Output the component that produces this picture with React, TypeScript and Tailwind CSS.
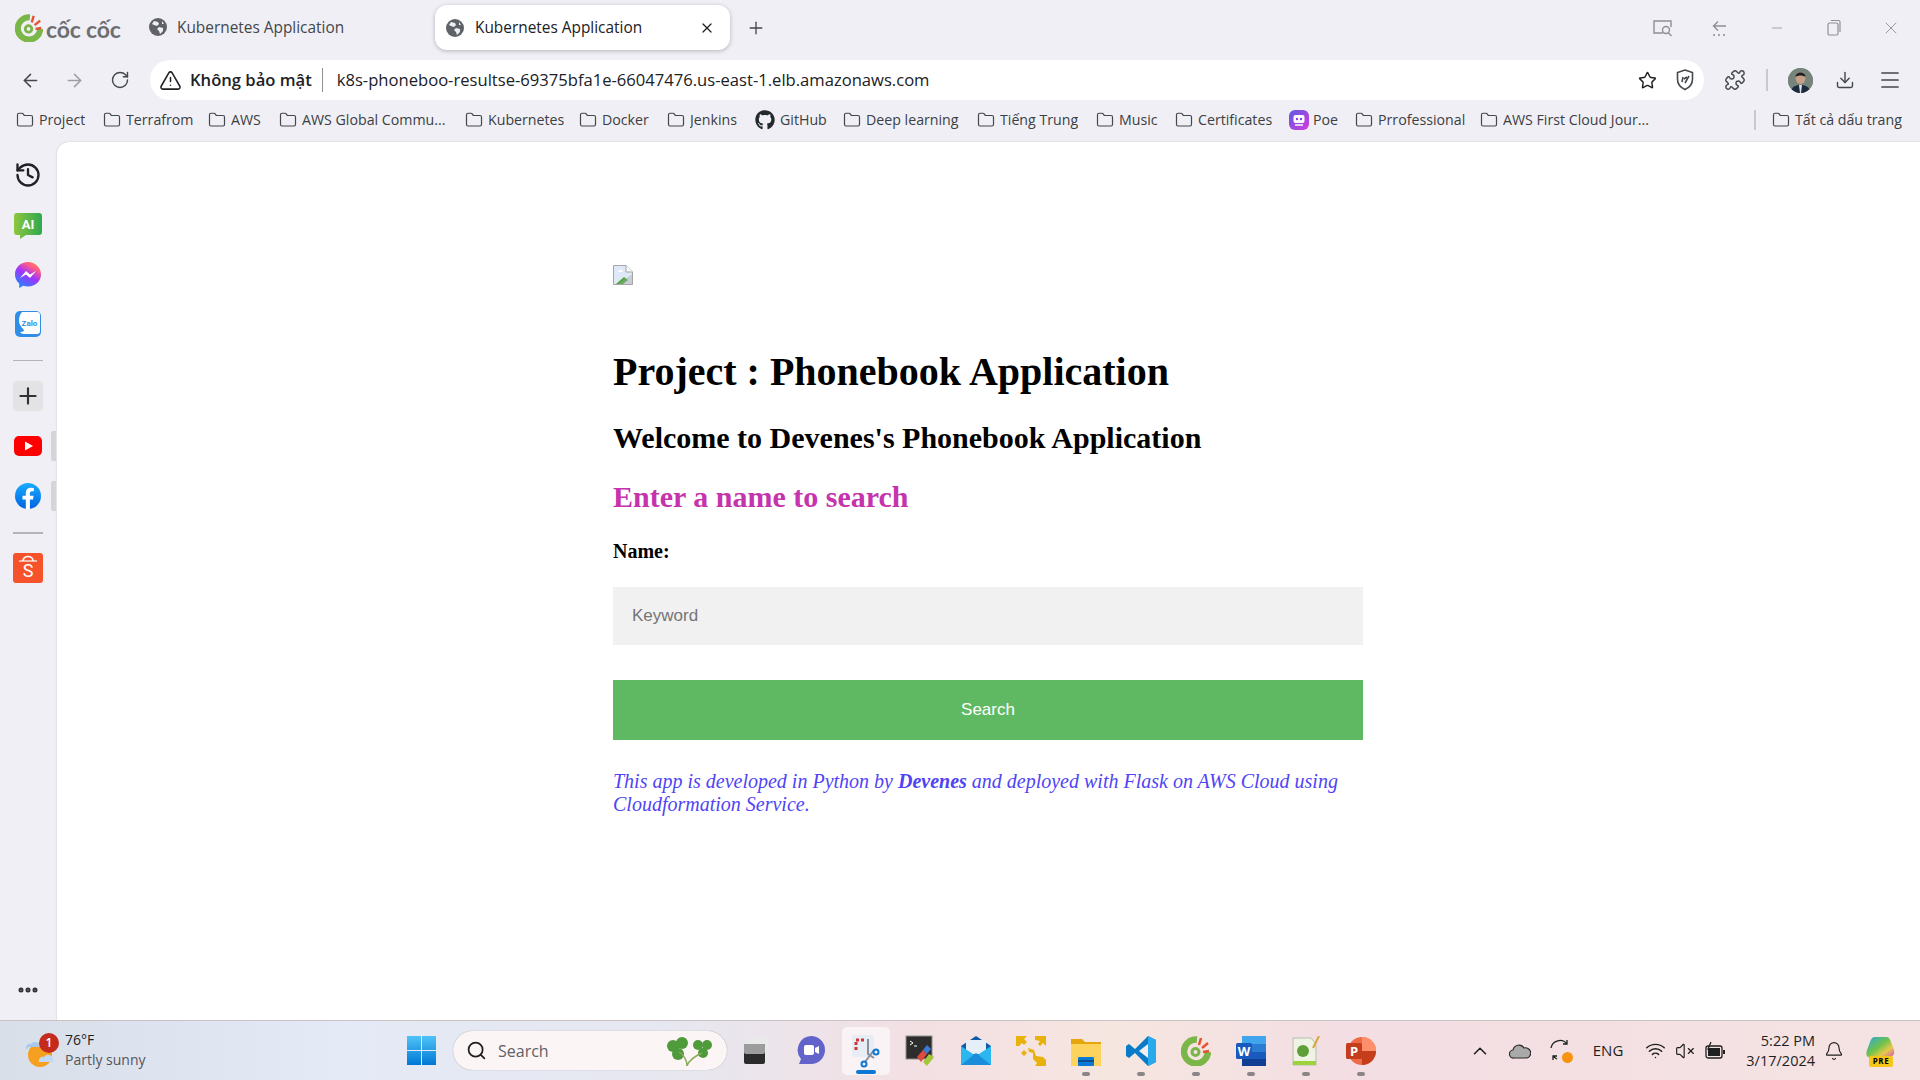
import {
    ArrowLeft,
    ArrowRight,
    Bell,
    ChevronUp,
    Download,
    Ellipsis,
    Folder,
    History,
    Menu,
    Minus,
    Plus,
    Puzzle,
    RotateCw,
    Search,
    Star,
    TriangleAlert,
    VolumeX,
    Wifi,
    X,
} from "lucide-react";
import {FaGithub} from "react-icons/fa";

const BOOKMARKS = [
    {label: "Project", w: "w-[87px]"},
    {label: "Terrafrom", w: "w-[105px]"},
    {label: "AWS", w: "w-[71px]"},
    {label: "AWS Global Commu...", w: "w-[186px]"},
    {label: "Kubernetes", w: "w-[114px]"},
    {label: "Docker", w: "w-[88px]"},
    {label: "Jenkins", w: "w-[88px]"},
];

const BOOKMARKS_2 = [
    {label: "Deep learning", w: "w-[134px]"},
    {label: "Tiếng Trung", w: "w-[119px]"},
    {label: "Music", w: "w-[79px]"},
    {label: "Certificates", w: "w-[114px]"},
];

function Globe({size = 18}: {size?: number}) {
    return (
        <svg width={size} height={size} viewBox="0 0 18 18" className="shrink-0">
            <circle cx="9" cy="9" r="9" fill="#5f6368" />
            <path d="M5 3l4 1 1 2-2 2-3-1-2-1zM10 9l4 1 0 3-3 3-1-3-2-2zM13 3l2 3-2 0z" fill="#efeff5" />
        </svg>
    );
}

function CocCocMark({size = 26}: {size?: number}) {
    return (
        <svg width={size} height={size} viewBox="0 0 30 30" className="shrink-0">
            <path d="M16 3.500A12 12 0 1 0 27 16" fill="none" stroke="#7ab648" strokeWidth="6.500" />
            <circle cx="14.500" cy="16" r="3.500" fill="none" stroke="#7ab648" strokeWidth="3" />
            <path d="M18 9l2-7" stroke="#e8502f" strokeWidth="2.500" />
            <path d="M21 12l6-5" stroke="#e8502f" strokeWidth="2.500" />
            <path d="M22 16l6-1" stroke="#e8502f" strokeWidth="2.500" />
        </svg>
    );
}

function Bookmark({label, w}: {label: string; w: string}) {
    return (
        <div className={`flex items-center gap-[5px] ${w}`}>
            <Folder size={18} strokeWidth={1.6} className="shrink-0 text-[#44474c]" />
            <span className="truncate whitespace-nowrap">{label}</span>
        </div>
    );
}

function SideItem({children, h = "h-[30px]"}: {children: React.ReactNode; h?: string}) {
    return <div className={`flex w-full items-center justify-center ${h}`}>{children}</div>;
}

function TaskIcon({children, dot, active}: {children: React.ReactNode; dot?: boolean; active?: boolean}) {
    return (
        <div className="relative flex h-[48px] w-[55px] shrink-0 items-center justify-center">
            {active && <div className="absolute left-[4px] h-[48px] w-[48px] rounded-[5px] bg-white/60" />}
            <div className="relative flex h-[32px] w-[32px] items-center justify-center">{children}</div>
            {dot && <div className="absolute bottom-[-1px] h-[4px] w-[8px] rounded-full bg-[#8a8688]" />}
            {active && <div className="absolute bottom-[1px] h-[4px] w-[20px] rounded-full bg-[#0a78d4]" />}
        </div>
    );
}

function BrokenImage() {
    return (
        <svg width="20" height="20" viewBox="0 0 20 20">
            <path d="M0.500 0.500H13L19.500 7V19.500H0.500Z" fill="#dfe8f7" stroke="#a5a5a5" />
            <path d="M13 0.500V7H19.500" fill="#fff" stroke="#a5a5a5" />
            <path d="M5 7c1-3 4-3 5 0z" fill="#fff" />
            <path d="M3 19L11 12 15 15 10 19Z" fill="#4fa83d" />
            <path d="M1 19.500H4L19.500 9V19.500Z" fill="#a5a5a5" opacity="0.400" />
        </svg>
    );
}

function TitleBar() {
    return (
        <div className="flex h-[55px] shrink-0 items-center pl-[15px]">
            <div className="flex w-[134px] shrink-0 items-center gap-[3px]">
                <CocCocMark size={28} />
                <span className="relative top-[2px] font-['Lato',sans-serif] text-[23px] font-bold leading-none tracking-[-0.2px] text-[#6d6e71]">
                    cốc cốc
                </span>
            </div>
            <div className="flex w-[286px] shrink-0 items-center gap-[10px] text-[15.4px] text-[#44474c]">
                <Globe />
                <span className="whitespace-nowrap">Kubernetes Application</span>
            </div>
            <div className="flex h-[45px] w-[295px] shrink-0 items-center gap-[11px] rounded-[12px] bg-white pl-[11px] pr-[15px] text-[15.4px] text-[#202124] shadow-[0_1px_4px_rgba(0,0,0,0.25)]">
                <Globe />
                <span className="whitespace-nowrap">Kubernetes Application</span>
                <X size={16} strokeWidth={1.8} className="ml-auto" />
            </div>
            <Plus size={20} strokeWidth={1.6} className="ml-[16px] text-[#44474c]" />
            <div className="ml-auto flex items-center text-[#8f9094]">
                <div className="flex w-[57px] justify-center">
                    <svg width="22" height="20" viewBox="0 0 22 20" fill="none" stroke="currentColor" strokeWidth="1.400">
                        <path d="M11 15H2V3h17v6" />
                        <circle cx="14" cy="12" r="3.500" />
                        <path d="M16.500 15l3 3" />
                    </svg>
                </div>
                <div className="flex w-[57px] justify-center">
                    <svg width="20" height="20" viewBox="0 0 20 20" fill="none" stroke="currentColor" strokeWidth="1.400">
                        <path d="M16 8H4M8 3.500L3.500 8 8 12.500" />
                        <path d="M3 17h2M8 17h2M13 17h2" />
                    </svg>
                </div>
                <div className="flex w-[57px] justify-center">
                    <Minus size={16} strokeWidth={1.2} />
                </div>
                <div className="flex w-[57px] justify-center">
                    <svg width="16" height="18" viewBox="0 0 16 18" fill="none" stroke="currentColor" strokeWidth="1.200">
                        <rect x="2" y="4" width="10" height="12" rx="1.500" />
                        <path d="M5 1.500h7.500a1.500 1.500 0 0 1 1.500 1.500v10" />
                    </svg>
                </div>
                <div className="flex w-[58px] justify-center">
                    <X size={20} strokeWidth={1.1} />
                </div>
            </div>
        </div>
    );
}

function AddressRow() {
    return (
        <div className="flex h-[50px] shrink-0 items-center">
            <div className="flex w-[150px] shrink-0 items-center pl-[20px]">
                <ArrowLeft size={21} strokeWidth={1.7} className="text-[#44474c]" />
                <ArrowRight size={21} strokeWidth={1.7} className="ml-[23px] text-[#9c9ea3]" />
                <RotateCw size={20} strokeWidth={1.7} className="ml-[25px] text-[#44474c]" />
            </div>
            <div className="flex h-[40px] w-[1554px] shrink-0 items-center rounded-full bg-white pl-[9px] pr-[9px]">
                <TriangleAlert size={23} strokeWidth={1.6} className="shrink-0 text-[#202124]" />
                <span className="ml-[8px] whitespace-nowrap text-[16.6px] font-semibold text-[#202124]">Không bảo mật</span>
                <div className="ml-[10px] h-[24px] w-px bg-[#8f9094]" />
                <span className="ml-[14px] whitespace-nowrap text-[16.6px] text-[#202124]">
                    k8s-phoneboo-resultse-69375bfa1e-66047476.us-east-1.elb.amazonaws.com
                </span>
                <Star size={19} strokeWidth={1.8} className="ml-auto text-[#202124]" />
                <svg width="20" height="24" viewBox="0 0 20 24" fill="none" stroke="#44474c" strokeWidth="1.600" className="ml-[18px]">
                    <path d="M10 2l7.500 2.500V11c0 5-3 8.500-7.500 10.500C5.500 19.500 2.500 16 2.500 11V4.500z" />
                    <path d="M7 14l1-5M10 15l4-7M9 11l3-2" />
                </svg>
            </div>
            <Puzzle size={22} strokeWidth={1.6} className="ml-[20px] text-[#44474c]" />
            <div className="ml-[20px] h-[22px] w-[2px] bg-[#c8c8ce]" />
            <div className="ml-[20px] flex h-[25px] w-[25px] items-center justify-center overflow-hidden rounded-full bg-[#7d8a80]">
                <svg width="25" height="25" viewBox="0 0 25 25">
                    <rect width="25" height="25" fill="#76857c" />
                    <ellipse cx="12.500" cy="10" rx="5" ry="6" fill="#c79f86" />
                    <path d="M7.500 9c0-6 10-6 10 0-3-2-7-2-10 0z" fill="#1f1f1f" />
                    <path d="M3 25c0-6 4-8 9.500-8s9.500 2 9.500 8z" fill="#1c2a3d" />
                    <path d="M11 17h3l-1 8h-1z" fill="#dfe3e8" />
                </svg>
            </div>
            <Download size={20} strokeWidth={1.7} className="ml-[22px] text-[#44474c]" />
            <Menu size={24} strokeWidth={1.7} className="ml-[23px] text-[#44474c]" />
        </div>
    );
}

function BookmarksRow() {
    return (
        <div className="flex h-[37px] shrink-0 items-center pb-[7px] pl-[16px] text-[14.2px] text-[#3c4043]">
            {BOOKMARKS.map((b) => (
                <Bookmark key={b.label} {...b} />
            ))}
            <div className="flex w-[88px] items-center gap-[5px]">
                <FaGithub size={20} className="shrink-0 text-[#24292e]" />
                <span>GitHub</span>
            </div>
            {BOOKMARKS_2.map((b) => (
                <Bookmark key={b.label} {...b} />
            ))}
            <div className="flex w-[66px] items-center gap-[4px]">
                <svg width="20" height="20" viewBox="0 0 20 20" className="shrink-0">
                    <defs>
                        <linearGradient id="poe" x1="0" y1="0" x2="1" y2="1">
                            <stop offset="0" stopColor="#5d5cde" />
                            <stop offset="1" stopColor="#d63ae0" />
                        </linearGradient>
                    </defs>
                    <rect width="20" height="20" rx="6" fill="url(#poe)" />
                    <rect x="4.500" y="5" width="11" height="8" rx="2" fill="#fff" />
                    <circle cx="8" cy="9" r="1.200" fill="#8a3fe0" />
                    <circle cx="12" cy="9" r="1.200" fill="#8a3fe0" />
                    <path d="M6 15h8" stroke="#fff" strokeWidth="1.500" />
                </svg>
                <span>Poe</span>
            </div>
            <Bookmark label="Prrofessional" w="w-[125px]" />
            <Bookmark label="AWS First Cloud Jour..." w="w-[178px]" />
            <div className="ml-[96px] h-[20px] w-[2px] bg-[#c8c8ce]" />
            <div className="ml-[16px] flex items-center gap-[5px] whitespace-nowrap">
                <Folder size={18} strokeWidth={1.6} className="shrink-0 text-[#44474c]" />
                <span>Tất cả dấu trang</span>
            </div>
        </div>
    );
}

function Sidebar() {
    return (
        <div className="flex h-full w-[57px] shrink-0 flex-col items-center pr-[1px] pt-[18px] pb-[18px]">
            <SideItem>
                <History size={28} strokeWidth={2} className="text-[#202124]" />
            </SideItem>
            <div className="mt-[21px] w-full">
                <SideItem>
                    <svg width="28" height="26" viewBox="0 0 28 26">
                        <defs>
                            <linearGradient id="ai" x1="0" y1="0" x2="1" y2="0">
                                <stop offset="0" stopColor="#8dc63f" />
                                <stop offset="1" stopColor="#2fa84f" />
                            </linearGradient>
                        </defs>
                        <path d="M3 0h22a3 3 0 0 1 3 3v16a3 3 0 0 1-3 3H12l-6 4v-4H3a3 3 0 0 1-3-3V3a3 3 0 0 1 3-3z" fill="url(#ai)" />
                        <text x="14" y="16" textAnchor="middle" fontSize="13" fontWeight="700" fill="#fff" fontFamily="Roboto, sans-serif">
                            AI
                        </text>
                    </svg>
                </SideItem>
            </div>
            <div className="mt-[19px] w-full">
                <SideItem>
                    <svg width="26" height="26" viewBox="0 0 26 26">
                        <defs>
                            <linearGradient id="ms" x1="0.2" y1="1" x2="0.8" y2="0">
                                <stop offset="0" stopColor="#1a8cff" />
                                <stop offset="0.5" stopColor="#a033ff" />
                                <stop offset="0.8" stopColor="#ff5c87" />
                                <stop offset="1" stopColor="#ff8a50" />
                            </linearGradient>
                        </defs>
                        <path d="M13 0C5.800 0 0 5.400 0 12.400c0 3.700 1.600 6.800 4.200 9V26l4.100-2.300c1.500.4 3 .7 4.700.7 7.200 0 13-5.400 13-12S20.200 0 13 0z" fill="url(#ms)" />
                        <path d="M5 16l6-7 4 3.500L21 9l-6 7-4-3.500z" fill="#fff" />
                    </svg>
                </SideItem>
            </div>
            <div className="mt-[19px] w-full">
                <SideItem>
                    <svg width="26" height="26" viewBox="0 0 26 26">
                        <rect width="26" height="26" rx="5" fill="#2f8fe6" />
                        <path d="M7 1h15a3 3 0 0 1 3 3v16a3 3 0 0 1-3 3H9c-2 0-3-1-4-2 3 0 4-1 4-2-3-3-5-6-5-9C4 6 5 3 7 1z" fill="#fff" />
                        <text x="14.500" y="14.500" textAnchor="middle" fontSize="8" fontWeight="700" fill="#2f8fe6" fontFamily="Roboto, sans-serif">
                            Zalo
                        </text>
                    </svg>
                </SideItem>
            </div>
            <div className="mt-[21px] h-px w-[30px] bg-[#b5b5b8]" />
            <div className="mt-[20px] flex h-[30px] w-[30px] items-center justify-center rounded-[4px] bg-[#e3e3e5]">
                <Plus size={26} strokeWidth={2} className="text-[#303134]" />
            </div>
            <div className="relative mt-[20px] w-full">
                <SideItem>
                    <svg width="28" height="20" viewBox="0 0 28 20">
                        <rect width="28" height="20" rx="5" fill="#f00" />
                        <path d="M11 5.500l8 4.500-8 4.500z" fill="#fff" />
                    </svg>
                </SideItem>
                <div className="absolute left-[51px] top-0 h-[30px] w-[5px] rounded-l-[2px] bg-[#d5d5d8]" />
            </div>
            <div className="relative mt-[20px] w-full">
                <SideItem>
                    <svg width="26" height="26" viewBox="0 0 26 26">
                        <defs>
                            <linearGradient id="fb" x1="0" y1="0" x2="0" y2="1">
                                <stop offset="0" stopColor="#18acfe" />
                                <stop offset="1" stopColor="#0163e0" />
                            </linearGradient>
                        </defs>
                        <circle cx="13" cy="13" r="13" fill="url(#fb)" />
                        <path d="M18 16.500l.6-3.800h-3.700v-2.400c0-1 .5-2 2.100-2H18.800V5.100s-1.500-.3-3-.3c-3 0-5 1.800-5 5.100v2.800H7.500v3.800h3.300V26h4.100v-9.500z" fill="#fff" />
                    </svg>
                </SideItem>
                <div className="absolute left-[51px] top-0 h-[30px] w-[5px] rounded-l-[2px] bg-[#d5d5d8]" />
            </div>
            <div className="mt-[21px] h-[2px] w-[30px] bg-[#b5b5b8]" />
            <div className="mt-[19px] w-full">
                <SideItem>
                    <svg width="30" height="30" viewBox="0 0 30 30">
                        <rect width="30" height="30" rx="3" fill="#f6532d" />
                        <path d="M10 8c0-6 10-6 10 0" fill="none" stroke="#fff" strokeWidth="1.700" />
                        <path d="M6 8h18" stroke="#fff" strokeWidth="1.200" />
                        <text x="15" y="24" textAnchor="middle" fontSize="18" fill="#fff" fontFamily="Roboto, sans-serif">
                            S
                        </text>
                    </svg>
                </SideItem>
            </div>
            <Ellipsis size={24} strokeWidth={3} className="mt-auto text-[#303134]" />
        </div>
    );
}

function PhonebookPage() {
    return (
        <div className="flex h-full min-w-0 flex-1 justify-center rounded-tl-[12px] bg-white pr-[1px] font-['Liberation_Serif',serif] text-black shadow-[0_0_2px_rgba(0,0,0,0.2)]">
            <div className="w-[750px] pt-[123px]">
                <BrokenImage />
                <h1 className="mt-[64px] text-[40px] font-bold leading-[46px]">Project : Phonebook Application</h1>
                <h2 className="mt-[25px] text-[30px] font-bold leading-[35px]">Welcome to Devenes's Phonebook Application</h2>
                <h2 className="mt-[24px] text-[30px] font-bold leading-[35px] text-[#c534ad]">Enter a name to search</h2>
                <p className="mt-[26px] text-[20px] font-bold leading-[23px]">Name:</p>
                <input
                    placeholder="Keyword"
                    className="mt-[24px] block h-[58px] w-full bg-[#f1f1f1] pl-[19px] font-['Liberation_Sans',sans-serif] text-[17px] placeholder:text-[#757575]"
                />
                <button className="mt-[35px] block h-[60px] w-full bg-[#5fb962] font-['Liberation_Sans',sans-serif] text-[17px] text-white">
                    Search
                </button>
                <p className="mt-[30px] text-[20px] italic leading-[23px] text-[#4f44f5]">
                    This app is developed in Python by <b>Devenes</b> and deployed with Flask on AWS Cloud using Cloudformation Service.
                </p>
            </div>
        </div>
    );
}

function Taskbar() {
    return (
        <div className="flex h-[60px] shrink-0 items-center border-t border-[#c9c1c3] bg-[linear-gradient(90deg,#d9dfe9_0%,#e4eaf6_18%,#e7e7f0_35%,#f3e0e3_48%,#f6e6e0_58%,#f3dee3_70%,#f5e3e3_100%)] text-[#1f1f1f]">
            <div className="flex w-[407px] shrink-0 items-center pl-[25px]">
                <div className="relative h-[36px] w-[32px] shrink-0">
                    <svg width="32" height="30" viewBox="0 0 32 30" className="absolute left-0 top-[5px]">
                        <circle cx="15" cy="17" r="12" fill="#f5a021" />
                        <path d="M1 11a4 4 0 0 1 5-5 5 5 0 0 1 9 3H3a2 2 0 0 1-2 2z" fill="#a8c8ee" />
                        <path d="M14 24a4 4 0 0 1 5-5 5 5 0 0 1 9 4v1z" fill="#c2d9f3" />
                    </svg>
                    <div className="absolute left-[14px] top-0 flex h-[20px] w-[20px] items-center justify-center rounded-full bg-[#c42b1c] font-['Open_Sans',sans-serif] text-[12px] font-semibold text-white">
                        1
                    </div>
                </div>
                <div className="relative top-[-1px] ml-[8px] font-['Open_Sans',sans-serif] text-[14px] leading-[20px]">
                    <div className="text-[#1f1f1f]">76°F</div>
                    <div className="text-[#55555c]">Partly sunny</div>
                </div>
            </div>
            <svg width="29" height="29" viewBox="0 0 29 29" className="shrink-0">
                <defs>
                    <linearGradient id="win" x1="0" y1="0" x2="0" y2="1">
                        <stop offset="0" stopColor="#4fc3f7" />
                        <stop offset="1" stopColor="#0078d4" />
                    </linearGradient>
                </defs>
                <path d="M0 0h14v14H0zM15 0h14v14H15zM0 15h14v14H0zM15 15h14v14H15z" fill="url(#win)" />
            </svg>
            <div className="ml-[17px] mr-[1px] flex h-[39px] w-[274px] shrink-0 items-center rounded-full bg-[#fbf5f5] pl-[13px] pr-[12px] shadow-[0_0_1px_rgba(0,0,0,0.4)]">
                <Search size={21} strokeWidth={2} className="text-[#1f1f1f]" />
                <span className="ml-[11px] font-['Open_Sans',sans-serif] text-[16px] text-[#5f5f66]">Search</span>
                <svg width="50" height="30" viewBox="0 0 50 30" className="ml-auto">
                    <g fill="#4f9a3b">
                        <circle cx="8" cy="10" r="6" />
                        <circle cx="17" cy="7" r="6" />
                        <circle cx="13" cy="18" r="6" />
                        <circle cx="33" cy="9" r="5" />
                        <circle cx="42" cy="9" r="5" />
                        <circle cx="38" cy="17" r="5" />
                    </g>
                    <path d="M22 30c0-6-2-10-8-14M22 30c2-6 8-10 15-13" fill="none" stroke="#8aa95a" strokeWidth="1.500" />
                </svg>
            </div>
            <TaskIcon>
                <svg width="30" height="30" viewBox="0 0 30 30">
                    <rect x="9" y="2" width="18" height="19" rx="2" fill="#e9e9e9" />
                    <rect x="3" y="8" width="21" height="20" rx="2" fill="#2b2b2b" />
                    <rect x="3" y="8" width="21" height="10" rx="2" fill="#9c9c9c" />
                </svg>
            </TaskIcon>
            <TaskIcon>
                <svg width="30" height="32" viewBox="0 0 30 32">
                    <path d="M15 1a14 14 0 0 1 0 28H3l2-5A14 14 0 0 1 15 1z" fill="#6264c9" />
                    <rect x="8" y="10" width="10" height="10" rx="2" fill="#fff" />
                    <path d="M19 13l4-2v8l-4-2z" fill="#fff" />
                </svg>
            </TaskIcon>
            <TaskIcon active>
                <svg width="30" height="34" viewBox="0 0 30 34" fill="none">
                    <rect x="1" y="1" width="22" height="22" rx="3" fill="#e7edf5" />
                    <path d="M5 16V6h10" stroke="#d13438" strokeWidth="3" strokeDasharray="3 2" />
                    <path d="M17 5v15l6 4M23 16l-9 12" stroke="#8a8f98" strokeWidth="2" />
                    <circle cx="25" cy="18" r="2.500" stroke="#0a78d4" strokeWidth="2" />
                    <circle cx="13" cy="30" r="2.500" stroke="#0a78d4" strokeWidth="2" />
                </svg>
            </TaskIcon>
            <TaskIcon>
                <svg width="32" height="32" viewBox="0 0 32 32">
                    <rect x="1" y="1" width="26" height="23" fill="#2d2d2d" stroke="#8f8f8f" />
                    <path d="M5 6l3 2-3 2M9 11h3" stroke="#fff" fill="none" />
                    <path d="M12 22l6-7 4 4-6 8z" fill="#e04a3f" />
                    <path d="M18 15l4-5 4 4-4 5z" fill="#3a7bd5" />
                    <path d="M18 27l6-8 5 3-7 9z" fill="#a4c639" />
                </svg>
            </TaskIcon>
            <TaskIcon>
                <svg width="30" height="30" viewBox="0 0 30 30">
                    <path d="M0 10L15 0l15 10v19H0z" fill="#0f5ba8" />
                    <path d="M5 4h20v14H5z" fill="#e6eef7" />
                    <path d="M0 10l15 10 15-10v19H0z" fill="#2bb6f0" />
                    <path d="M0 29l15-12 15 12z" fill="#1a8ddb" />
                </svg>
            </TaskIcon>
            <TaskIcon>
                <svg width="30" height="30" viewBox="0 0 30 30" fill="#e9b10e">
                    <path d="M0 0h11l-3 3 3 3-3 3-2-2-3 3H0zM19 0h11v10l-3-3-3 3-2-2 2-3-5-1zM12 12l6 2 2 6 7 1 3 3v6H19l2-3-4-4v-6l-4-1zM8 14l3 3-3 3-3-3z" />
                </svg>
            </TaskIcon>
            <TaskIcon dot>
                <svg width="30" height="30" viewBox="0 0 30 30">
                    <path d="M0 3h11l3 3h16v24H0z" fill="#e5a50f" />
                    <path d="M0 8h30v22H0z" fill="#fcd35c" />
                    <rect x="7" y="21" width="16" height="9" rx="1" fill="#0a78d4" />
                    <rect x="7" y="24" width="16" height="2" fill="#07508d" />
                </svg>
            </TaskIcon>
            <TaskIcon dot>
                <svg width="30" height="30" viewBox="0 0 30 30">
                    <path d="M22 0l8 4v22l-8 4L9 17l-6 5-3-2v-10l3-2 6 5z" fill="#0a7cc7" />
                    <path d="M22 0l8 4v22l-8 4z" fill="#29a9ee" />
                    <path d="M22 8v14l-9-7z" fill="#f2eef0" />
                </svg>
            </TaskIcon>
            <TaskIcon dot>
                <CocCocMark size={30} />
            </TaskIcon>
            <TaskIcon dot>
                <svg width="30" height="30" viewBox="0 0 30 30">
                    <rect x="6" y="0" width="24" height="30" rx="2" fill="#2b7cd3" />
                    <rect x="6" y="0" width="24" height="8" fill="#41a5ee" />
                    <rect x="6" y="16" width="24" height="7" fill="#185abd" />
                    <rect x="6" y="23" width="24" height="7" fill="#103f91" />
                    <rect x="0" y="7" width="16" height="16" rx="1.500" fill="#185abd" />
                    <text x="8" y="19.500" textAnchor="middle" fontSize="13" fontWeight="700" fill="#fff" fontFamily="Open Sans, sans-serif">
                        W
                    </text>
                </svg>
            </TaskIcon>
            <TaskIcon dot>
                <svg width="30" height="30" viewBox="0 0 30 30">
                    <path d="M2 2h18l5 6v21H2z" fill="#eef3e3" stroke="#b8bfb0" />
                    <path d="M2 25h23v4H2z" fill="#9dd33a" />
                    <circle cx="12" cy="15" r="6" fill="#5f9f3a" />
                    <path d="M22 12L28 0" stroke="#d9a43a" strokeWidth="2" />
                </svg>
            </TaskIcon>
            <TaskIcon dot>
                <svg width="30" height="30" viewBox="0 0 30 30">
                    <circle cx="16" cy="15" r="14" fill="#ed6c47" />
                    <path d="M16 1a14 14 0 0 1 14 14H16z" fill="#ff8f6b" />
                    <path d="M16 15h14a14 14 0 0 1-14 14z" fill="#c43e1c" />
                    <rect x="0" y="7" width="16" height="16" rx="1.500" fill="#c43e1c" />
                    <text x="8" y="19.500" textAnchor="middle" fontSize="13" fontWeight="700" fill="#fff" fontFamily="Open Sans, sans-serif">
                        P
                    </text>
                </svg>
            </TaskIcon>
            <div className="ml-auto flex items-center font-['Open_Sans',sans-serif]">
                <ChevronUp size={22} strokeWidth={1.7} />
                <svg width="22" height="16" viewBox="0 0 22 16" className="ml-[18px]">
                    <path d="M5 15a4 4 0 0 1-1-8 6 6 0 0 1 11-2 5 5 0 0 1 3 10z" fill="#a9a9a9" stroke="#2b2b2b" strokeWidth="1.200" />
                </svg>
                <div className="relative ml-[18px] h-[24px] w-[22px]">
                    <svg width="22" height="22" viewBox="0 0 22 22" fill="none" stroke="#1f1f1f" strokeWidth="1.300">
                        <path d="M2 9a9 9 0 0 1 16-4M18 1v4h-4M4 21v-4h4M4 17c1 1 2 2 4 3" />
                    </svg>
                    <div className="absolute bottom-0 right-[-2px] h-[11px] w-[11px] rounded-full bg-[#f7930e]" />
                </div>
                <span className="ml-[22px] text-[15px] text-[#1f1f1f]">ENG</span>
                <Wifi size={21} strokeWidth={1.700} className="ml-[22px]" />
                <VolumeX size={20} strokeWidth={1.400} className="ml-[9px]" />
                <svg width="20" height="18" viewBox="0 0 20 18" className="ml-[10px]">
                    <rect x="1" y="4" width="16" height="12" rx="2" fill="none" stroke="#1f1f1f" strokeWidth="1.300" />
                    <rect x="3" y="6" width="12" height="8" fill="#1f1f1f" />
                    <rect x="18" y="8" width="2" height="4" fill="#1f1f1f" />
                    <path d="M6 0L3 7h3l-1 5" fill="none" stroke="#1f1f1f" strokeWidth="1.300" />
                </svg>
                <div className="ml-[21px] text-right text-[14.5px] leading-[20px]">
                    <div>5:22 PM</div>
                    <div>3/17/2024</div>
                </div>
                <Bell size={20} strokeWidth={1.400} className="ml-[9px]" />
                <div className="relative ml-[22px] mr-[24px] h-[30px] w-[30px]">
                    <svg width="30" height="24" viewBox="0 0 30 24">
                        <defs>
                            <linearGradient id="cop" x1="0" y1="0" x2="1" y2="1">
                                <stop offset="0" stopColor="#2aa7e0" />
                                <stop offset="0.45" stopColor="#6fc24a" />
                                <stop offset="0.7" stopColor="#e8c84a" />
                                <stop offset="1" stopColor="#d04fc0" />
                            </linearGradient>
                        </defs>
                        <path d="M9 1h11c3 0 4 2 5 5l3 8c1 4-1 7-5 7H11C7 21 5 23 2 21c-2-1-2-4-1-7l3-8c1-3 2-5 5-5z" fill="url(#cop)" />
                    </svg>
                    <div className="absolute bottom-[-1px] left-[3px] flex h-[11px] w-[24px] items-center justify-center rounded-[2px] bg-[#f5c518] text-[8px] font-bold tracking-[0.5px] text-black">
                        PRE
                    </div>
                </div>
            </div>
        </div>
    );
}

export default function App() {
    return (
        <div className="flex h-[1080px] w-[1920px] flex-col overflow-hidden bg-[#efeff5] font-['Open_Sans',sans-serif] text-[15px]">
            <TitleBar />
            <AddressRow />
            <BookmarksRow />
            <div className="flex min-h-0 flex-1">
                <Sidebar />
                <PhonebookPage />
            </div>
            <Taskbar />
        </div>
    );
}
